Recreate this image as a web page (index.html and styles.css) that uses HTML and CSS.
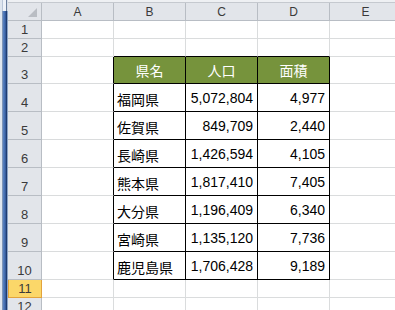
FILE: index.html
```html
<!DOCTYPE html>
<html lang="ja">
<head>
<meta charset="utf-8">
<link rel="stylesheet" href="styles.css">
</head>
<body>
<div class="app">
  <div class="sidebar"><div class="thumb"></div></div>
  <div class="sheet">
    <div class="topband"></div>
    <div class="grid">
      <div class="hd corner"><span class="tri"></span></div>
      <div class="hd col">A</div>
      <div class="hd col">B</div>
      <div class="hd col">C</div>
      <div class="hd col">D</div>
      <div class="hd col">E</div>

      <div class="hd row">1</div>
      <div class="c"></div><div class="c"></div><div class="c"></div><div class="c"></div><div class="c"></div>

      <div class="hd row">2</div>
      <div class="c"></div><div class="c bb"></div><div class="c bb"></div><div class="c bb"></div><div class="c"></div>

      <div class="hd row">3</div>
      <div class="c br"></div>
      <div class="c t th">県名</div>
      <div class="c t th">人口</div>
      <div class="c t th">面積</div>
      <div class="c"></div>

      <div class="hd row">4</div>
      <div class="c br"></div>
      <div class="c t name">福岡県</div>
      <div class="c t num">5,072,804</div>
      <div class="c t num">4,977</div>
      <div class="c"></div>

      <div class="hd row">5</div>
      <div class="c br"></div>
      <div class="c t name">佐賀県</div>
      <div class="c t num">849,709</div>
      <div class="c t num">2,440</div>
      <div class="c"></div>

      <div class="hd row">6</div>
      <div class="c br"></div>
      <div class="c t name">長崎県</div>
      <div class="c t num">1,426,594</div>
      <div class="c t num">4,105</div>
      <div class="c"></div>

      <div class="hd row">7</div>
      <div class="c br"></div>
      <div class="c t name">熊本県</div>
      <div class="c t num">1,817,410</div>
      <div class="c t num">7,405</div>
      <div class="c"></div>

      <div class="hd row">8</div>
      <div class="c br"></div>
      <div class="c t name">大分県</div>
      <div class="c t num">1,196,409</div>
      <div class="c t num">6,340</div>
      <div class="c"></div>

      <div class="hd row">9</div>
      <div class="c br"></div>
      <div class="c t name">宮崎県</div>
      <div class="c t num">1,135,120</div>
      <div class="c t num">7,736</div>
      <div class="c"></div>

      <div class="hd row">10</div>
      <div class="c br"></div>
      <div class="c t name">鹿児島県</div>
      <div class="c t num">1,706,428</div>
      <div class="c t num">9,189</div>
      <div class="c"></div>

      <div class="hd row sel">11</div>
      <div class="c"></div><div class="c"></div><div class="c"></div><div class="c"></div><div class="c"></div>

      <div class="hd row">12</div>
      <div class="c"></div><div class="c"></div><div class="c"></div><div class="c"></div><div class="c"></div>
    </div>
  </div>
</div>
</body>
</html>
```

FILE: styles.css
```css
* { box-sizing: border-box; }
html, body {
  margin: 0;
  padding: 0;
  background: #ffffff;
  overflow: hidden;
}
.app {
  display: flex;
  width: 395px;
  height: 310px;
  overflow: hidden;
}
.sidebar {
  width: 8px;
  flex: none;
  display: flex;
  flex-direction: column;
  background: linear-gradient(to right, #dfe6ef 0, #dfe6ef 2px, #b9c6d8 2px, #b9c6d8 3px, #eef2f8 3px, #eef2f8 6px, #6b7f9c 6px, #6b7f9c 7px, #d7dee8 7px);
}
.thumb {
  margin-top: 11px;
  flex: 1;
  background: linear-gradient(to right, #dfe6ef 0, #dfe6ef 2px, #7f96b8 2px, #7f96b8 3px, #5d86c4 3px, #3f68ab 5px, #2c4f8e 6px, #1f3b6e 6px, #1f3b6e 7px, #8aa3c7 7px);
}
.sheet {
  flex: 1;
  display: flex;
  flex-direction: column;
  min-width: 0;
}
.topband {
  height: 3px;
  flex: none;
  background: #eef0f3;
  border-bottom: 1px solid #c5c9cf;
}
.grid {
  display: grid;
  grid-template-columns: 34px repeat(5, 72px);
  grid-template-rows: 18px 18px 18px 27px repeat(7, 28px) 18px 18px;
  font-family: "Liberation Sans", Arial, sans-serif;
}
.hd {
  background: #e2e5ea;
  border-right: 1px solid #b8bdc4;
  border-bottom: 1px solid #b8bdc4;
  color: #3a3a3a;
  display: flex;
  justify-content: center;
}
.col {
  align-items: center;
  font-size: 12px;
  padding-top: 1px;
}
.row {
  align-items: flex-end;
  font-size: 13px;
  padding-bottom: 1px;
  line-height: 14px;
}
.row.sel {
  background: #fbd769;
  border: 1px solid #e2a33c;
  border-top: none;
}
.corner {
  position: relative;
}
.tri {
  position: absolute;
  right: 4px;
  bottom: 3px;
  width: 0;
  height: 0;
  border-left: 9px solid transparent;
  border-bottom: 9px solid #b9bdc3;
}
.c {
  border-right: 1px solid #dadcdd;
  border-bottom: 1px solid #dadcdd;
  background: #ffffff;
}
.c.bb { border-bottom-color: #000000; }
.c.br { border-right-color: #000000; }
.c.t {
  border-right-color: #000000;
  border-bottom-color: #000000;
  display: flex;
  align-items: flex-end;
  line-height: 16px;
}
.th {
  background: #76933c;
  color: #ffffff;
  justify-content: center;
  align-items: center !important;
  font-family: "Noto Sans CJK JP", sans-serif;
  font-size: 14px;
  padding-bottom: 1px;
}
.name {
  font-family: "Noto Sans CJK JP", sans-serif;
  font-size: 14px;
  color: #000000;
  padding: 0 0 4px 3px;
}
.num {
  justify-content: flex-end;
  font-family: "Liberation Sans", Arial, sans-serif;
  font-size: 14px;
  color: #000000;
  padding: 0 4px 5px 0;
}
```
